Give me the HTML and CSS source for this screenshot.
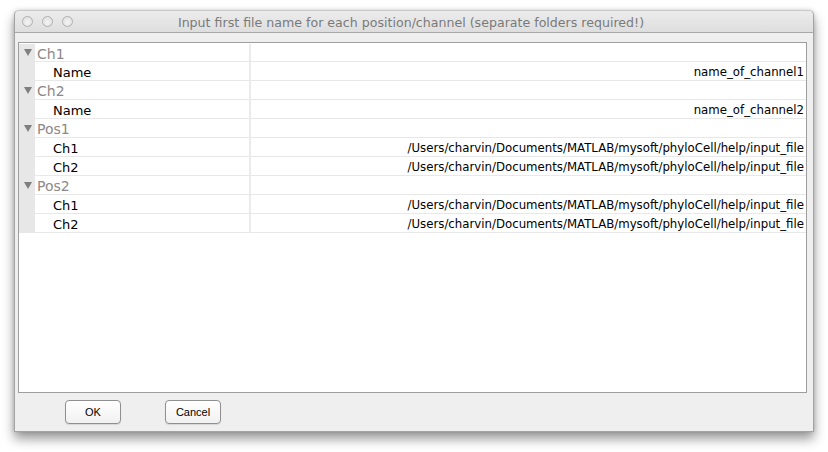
FILE: index.html
```html
<!DOCTYPE html>
<html>
<head>
<meta charset="utf-8">
<link rel="stylesheet" href="styles.css">
</head>
<body>
<div class="window">
  <div class="titlebar">
    <div class="lights">
      <span class="light"></span><span class="light"></span><span class="light"></span>
    </div>
    <div class="title">Input first file name for each position/channel (separate folders required!)</div>
  </div>
  <div class="content">
    <div class="panel">
      <div class="tree">
        <div class="row head"><div class="strip"><span class="tri"></span></div><div class="key">Ch1</div><div class="val"></div></div>
        <div class="row"><div class="strip"></div><div class="key child">Name</div><div class="val">name_of_channel1</div></div>
        <div class="row head"><div class="strip"><span class="tri"></span></div><div class="key">Ch2</div><div class="val"></div></div>
        <div class="row"><div class="strip"></div><div class="key child">Name</div><div class="val">name_of_channel2</div></div>
        <div class="row head"><div class="strip"><span class="tri"></span></div><div class="key">Pos1</div><div class="val"></div></div>
        <div class="row"><div class="strip"></div><div class="key child">Ch1</div><div class="val">/Users/charvin/Documents/MATLAB/mysoft/phyloCell/help/input_file</div></div>
        <div class="row"><div class="strip"></div><div class="key child">Ch2</div><div class="val">/Users/charvin/Documents/MATLAB/mysoft/phyloCell/help/input_file</div></div>
        <div class="row head"><div class="strip"><span class="tri"></span></div><div class="key">Pos2</div><div class="val"></div></div>
        <div class="row"><div class="strip"></div><div class="key child">Ch1</div><div class="val">/Users/charvin/Documents/MATLAB/mysoft/phyloCell/help/input_file</div></div>
        <div class="row"><div class="strip"></div><div class="key child">Ch2</div><div class="val">/Users/charvin/Documents/MATLAB/mysoft/phyloCell/help/input_file</div></div>
      </div>
    </div>
    <div class="buttons">
      <button class="btn">OK</button>
      <button class="btn">Cancel</button>
    </div>
  </div>
</div>
</body>
</html>
```

FILE: styles.css
```css
html, body {
  margin: 0;
  padding: 0;
  background: #ffffff;
}
body {
  width: 828px;
  height: 452px;
  padding: 10px 0 0 14px;
  box-sizing: border-box;
  font-family: "DejaVu Sans", sans-serif;
}
.window {
  width: 800px;
  height: 422px;
  box-sizing: border-box;
  border: 1px solid #a3a3a3;
  border-top-color: #c8c8c8;
  border-radius: 5px 5px 0 0;
  background: #efefef;
  box-shadow: 0 7px 12px rgba(0, 0, 0, 0.4), 0 0 4px rgba(0, 0, 0, 0.15);
  display: flex;
  flex-direction: column;
}
.titlebar {
  height: 21px;
  border-bottom: 1px solid #a9a9a9;
  background: linear-gradient(#ececec, #dedede);
  border-radius: 5px 5px 0 0;
  display: flex;
  align-items: center;
  position: relative;
}
.lights {
  display: flex;
  gap: 9px;
  padding-left: 7px;
  position: absolute;
  left: 0;
  top: 5px;
}
.light {
  width: 11px;
  height: 11px;
  border-radius: 50%;
  border: 1px solid #b0b0b0;
  background: radial-gradient(circle at 50% 60%, #f4f4f4, #dcdcdc);
  box-sizing: border-box;
}
.title {
  flex: 1;
  text-align: center;
  font-size: 12.6px;
  color: #7a7a7a;
  padding-top: 1px;
  padding-right: 6px;
}
.content {
  flex: 1;
  display: flex;
  flex-direction: column;
  padding: 9px 6px 0 3px;
}
.panel {
  height: 351px;
  box-sizing: border-box;
  border: 1px solid #9e9e9e;
  background: #ffffff;
  padding-top: 1px;
}
.row {
  display: grid;
  grid-template-columns: 16px 214px 1fr;
  height: 19px;
  box-sizing: border-box;
}
.row:first-child {
  height: 18px;
}
.strip {
  background: #e7e7e7;
  position: relative;
}
.tri {
  position: absolute;
  left: 5px;
  top: 6px;
  width: 0;
  height: 0;
  border-left: 4px solid transparent;
  border-right: 4px solid transparent;
  border-top: 7px solid #7f7f7f;
}
.row:first-child .tri {
  top: 5px;
}
.key, .val {
  border-bottom: 1px solid #e8e8e8;
  font-size: 11.75px;
  line-height: 21px;
  white-space: nowrap;
  overflow: hidden;
}
.row:first-child .key, .row:first-child .val {
  line-height: 20px;
}
.key {
  padding-left: 2px;
  color: #8e8886;
  font-size: 14px;
}
.key.child {
  padding-left: 18px;
  color: #000000;
  font-size: 13px;
}
.val {
  border-left: 2px solid #ebebeb;
  text-align: right;
  padding-right: 2px;
  color: #000000;
}
.buttons {
  display: flex;
  gap: 44px;
  padding: 7px 0 0 47px;
}
.btn {
  width: 56px;
  height: 24px;
  border: 1px solid #8f8f8f;
  border-radius: 4px;
  background: linear-gradient(#ffffff, #f1f1f1);
  font-family: "Liberation Sans", sans-serif;
  font-size: 11px;
  color: #000000;
  padding: 0;
  box-shadow: 0 1px 1px rgba(0, 0, 0, 0.1);
}
```
